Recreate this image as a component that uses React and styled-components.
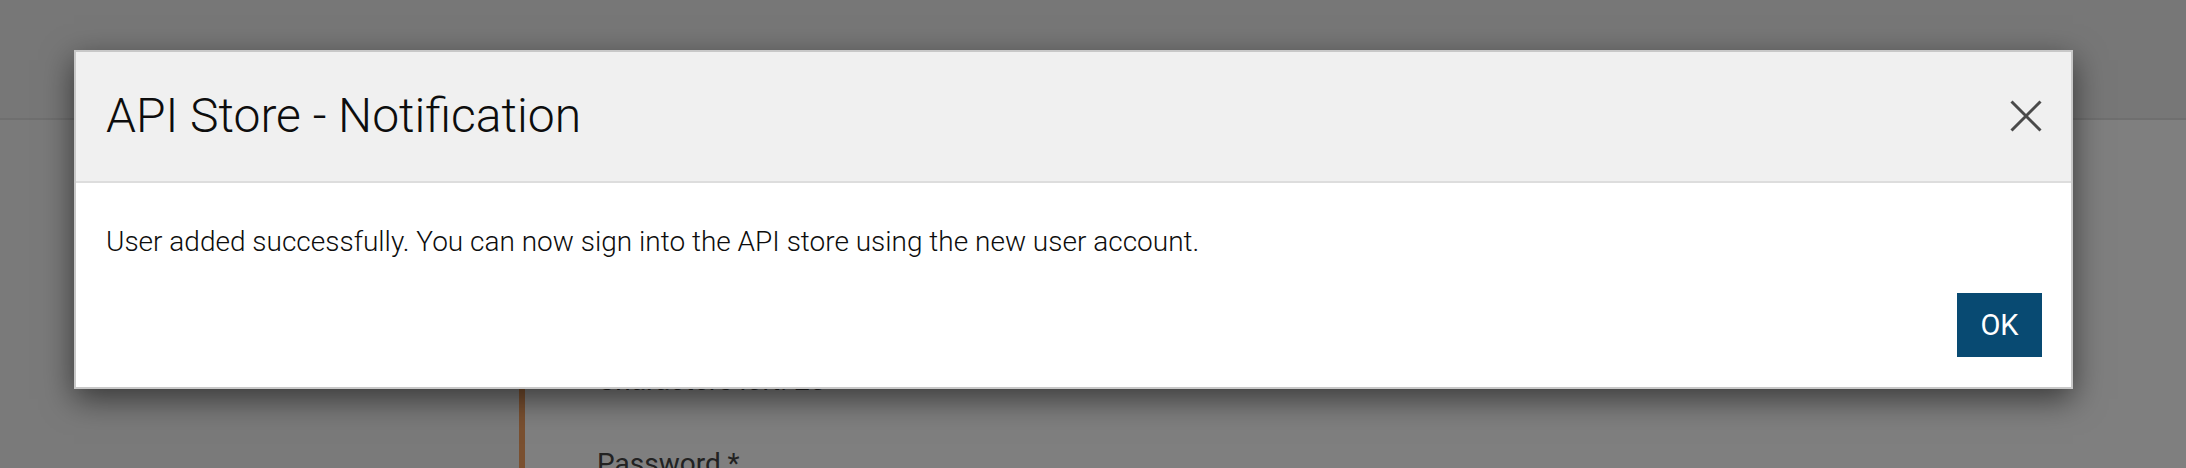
import React from 'react';
import styled, { createGlobalStyle } from 'styled-components';

const GlobalStyle = createGlobalStyle`
  html, body {
    margin: 0;
    padding: 0;
    width: 2186px;
    height: 468px;
    overflow: hidden;
    font-family: Roboto, "Liberation Sans", sans-serif;
  }
  * {
    box-sizing: border-box;
  }
`;

const Page = styled.div`
  position: relative;
  width: 2186px;
  height: 468px;
  overflow: hidden;
  display: flex;
  flex-direction: column;
  background: #ffffff;
`;

const TopBar = styled.div`
  height: 120px;
  flex-shrink: 0;
  background: #eeeeee;
  border-bottom: 2px solid #dedede;
`;

const Columns = styled.div`
  flex: 1;
  display: flex;
`;

const Sidebar = styled.div`
  width: 519px;
  background: #f4f4f4;
`;

const Content = styled.div`
  flex: 1;
  border-left: 6px solid #f4a060;
  padding: 241px 0 0 72px;
  background: #ffffff;
`;

const FieldNote = styled.div`
  font-size: 28px;
  line-height: 39px;
  color: #444444;
`;

const FieldLabel = styled.div`
  margin-top: 44px;
  font-size: 28px;
  line-height: 39px;
  color: #444444;
`;

const Backdrop = styled.div`
  position: absolute;
  inset: 0;
  background: rgba(0, 0, 0, 0.5);
`;

const Modal = styled.div`
  position: absolute;
  left: 74px;
  top: 50px;
  width: 1999px;
  height: 339px;
  border: 2px solid #c8c8c8;
  background: #ffffff;
  box-shadow: 0 10px 30px rgba(0, 0, 0, 0.55);
  display: flex;
  flex-direction: column;
`;

const Header = styled.div`
  height: 131px;
  flex-shrink: 0;
  display: flex;
  align-items: center;
  justify-content: space-between;
  padding: 0 29px 2px 30px;
  background: #f0f0f0;
  border-bottom: 2px solid #dddddd;
`;

const Title = styled.h4`
  margin: 0;
  font-size: 48px;
  font-weight: 300;
  color: #0d0d0d;
  line-height: 1.2;
`;

const CloseButton = styled.button`
  width: 32px;
  height: 32px;
  padding: 0;
  border: none;
  background: none;
  display: flex;
  cursor: pointer;
`;

const Body = styled.div`
  padding: 39px 30px 0 30px;
  font-size: 28px;
  font-weight: 300;
  line-height: 40px;
  color: #0d0d0d;
`;

const Footer = styled.div`
  display: flex;
  justify-content: flex-end;
  padding: 31px 29px 0 30px;
`;

const OkButton = styled.button`
  width: 85px;
  height: 64px;
  border: none;
  border-radius: 0;
  background: #084a72;
  color: #ffffff;
  font-family: Roboto, "Liberation Sans", sans-serif;
  font-size: 29px;
  font-weight: 400;
  cursor: pointer;
`;

function CloseIcon() {
  return (
    <svg width="32" height="32" viewBox="0 0 32 32">
      <path
        d="M1.5 1.5 L30.5 30.5 M30.5 1.5 L1.5 30.5"
        stroke="#4a4a4a"
        strokeWidth="3"
        fill="none"
      />
    </svg>
  );
}

function App() {
  return (
    <Page>
      <GlobalStyle />
      <TopBar />
      <Columns>
        <Sidebar />
        <Content>
          <FieldNote>Characters left: 25</FieldNote>
          <FieldLabel>Password *</FieldLabel>
        </Content>
      </Columns>
      <Backdrop />
      <Modal>
        <Header>
          <Title>API Store - Notification</Title>
          <CloseButton aria-label="Close">
            <CloseIcon />
          </CloseButton>
        </Header>
        <Body>
          User added successfully. You can now sign into the API store using the new user account.
        </Body>
        <Footer>
          <OkButton>OK</OkButton>
        </Footer>
      </Modal>
    </Page>
  );
}

export default App;
